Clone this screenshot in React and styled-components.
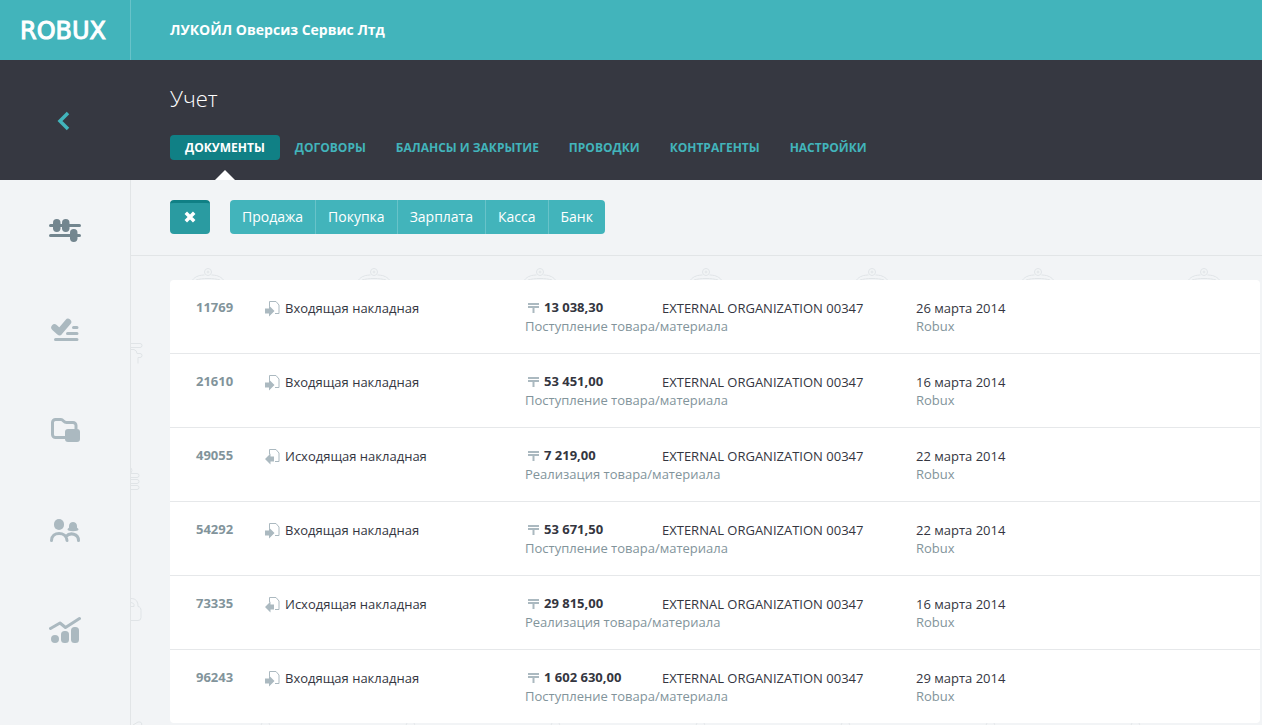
import React from 'react';
import styled, { createGlobalStyle } from 'styled-components';

const color = {
  teal: '#42b4bb',
  tealLine: '#68c3c9',
  tealDark: '#108085',
  tealMid: '#2a9ba1',
  dark: '#363841',
  page: '#f2f4f6',
  line: '#e2e5e7',
  icon: '#abb9c0',
  iconActive: '#73868f',
  muted: '#82949b',
  text: '#34363f',
};

const GlobalStyle = createGlobalStyle`
  *, *::before, *::after { box-sizing: border-box; }
  body {
    margin: 0;
    background: ${color.page};
    color: ${color.text};
    font-family: "Open Sans", "Noto Sans", sans-serif;
    font-size: 13px;
    line-height: 18px;
  }
  button { font-family: inherit; cursor: pointer; }
  a { text-decoration: none; }
`;

const Page = styled.div`
  display: flex;
  flex-direction: column;
  min-height: 100vh;
`;

const TopBar = styled.header`
  display: flex;
  height: 60px;
  background: ${color.teal};
  color: #fff;
`;

const Logo = styled.a`
  display: flex;
  align-items: center;
  flex: none;
  width: 131px;
  padding: 2px 0 0 20px;
  border-right: 1px solid ${color.tealLine};
  color: #fff;
  font-family: "DejaVu Sans", sans-serif;
  font-size: 24px;
  line-height: 28px;
  -webkit-text-stroke: 1px #fff;
`;

const Company = styled.div`
  padding: 20px 39px;
  font-size: 14px;
  font-weight: 700;
  line-height: 20px;
`;

const SectionBar = styled.div`
  display: flex;
  height: 120px;
  background: ${color.dark};
`;

const BackButton = styled.button`
  display: flex;
  align-items: center;
  justify-content: center;
  flex: none;
  width: 131px;
  padding: 2px 6px 0 0;
  border: 0;
  background: none;
`;

const SectionContent = styled.div`
  padding: 23px 39px 0;
`;

const Title = styled.h1`
  margin: 0 0 22px;
  color: #fff;
  font-size: 22px;
  font-weight: 300;
  line-height: 30px;
`;

const Tabs = styled.nav`
  display: flex;
`;

const Tab = styled.a`
  position: relative;
  padding: 0 15px;
  border-radius: 4px;
  background: ${(p) => (p.$active ? color.tealDark : 'transparent')};
  color: ${(p) => (p.$active ? '#fff' : color.teal)};
  font-size: 12px;
  font-weight: 700;
  line-height: 25px;
  white-space: nowrap;

  &::after {
    content: "";
    display: ${(p) => (p.$active ? 'block' : 'none')};
    position: absolute;
    left: 50%;
    top: 35px;
    margin-left: -10px;
    border: 10px solid transparent;
    border-top: 0;
    border-bottom-color: #fff;
  }
`;

const Body = styled.div`
  display: flex;
  flex: 1;
`;

const Sidebar = styled.nav`
  flex: none;
  width: 131px;
  border-right: 1px solid ${color.line};
`;

const SideLink = styled.a`
  display: flex;
  align-items: center;
  justify-content: center;
  height: 100px;
  color: ${(p) => (p.$active ? color.iconActive : color.icon)};
`;

const Main = styled.main`
  flex: 1;
  min-width: 0;
  display: flex;
  flex-direction: column;
`;

const Toolbar = styled.div`
  display: flex;
  gap: 20px;
  padding: 20px 39px 21px;
  border-bottom: 1px solid ${color.line};
`;

const CloseButton = styled.button`
  display: flex;
  align-items: center;
  justify-content: center;
  width: 40px;
  height: 34px;
  padding: 0 0 3px;
  border: 0;
  border-top: 3px solid ${color.tealDark};
  border-radius: 4px;
  background: ${color.tealMid};
`;

const ButtonGroup = styled.div`
  display: flex;
  border-radius: 4px;
  overflow: hidden;
`;

const GroupButton = styled.button`
  height: 34px;
  padding: 0 12px;
  border: 0;
  background: ${color.teal};
  color: #fff;
  font-size: 14px;
  line-height: 34px;

  & + & { border-left: 1px solid ${color.tealLine}; }
`;

const Workspace = styled.section`
  position: relative;
  flex: 1;
  padding: 24px 2px 2px 39px;
`;

const Backdrop = styled.svg`
  position: absolute;
  inset: 0;
  width: 100%;
  height: 100%;
`;

const DocumentTable = styled.table`
  position: relative;
  width: 100%;
  table-layout: fixed;
  border-collapse: separate;
  border-spacing: 0;
  border-radius: 4px;
  background: #fff;
`;

const Col = styled.col`
  width: ${(p) => p.$width};
`;

const Row = styled.tr`
  & + & > td {
    height: 74px;
    border-top: 1px solid #e6e8ea;
  }
`;

const Cell = styled.td`
  height: 73px;
  padding: 19px 0 0;
  vertical-align: top;
  white-space: nowrap;
`;

const IdCell = styled(Cell)`
  padding-left: 26px;
  color: ${color.muted};
  font-weight: 700;
  line-height: 16px;
`;

const DocType = styled.div`
  display: flex;
  gap: 5px;
`;

const Amount = styled.div`
  display: flex;
  gap: 5px;
  margin-bottom: 2px;
  padding-left: 3px;
  font-weight: 700;
  line-height: 16px;
`;

const Muted = styled.div`
  color: ${color.muted};
`;

const AccountingIcon = () => (
  <svg width="32" height="26" viewBox="0 -1 32 26" fill="currentColor" aria-hidden="true">
    <path d="M1.500 7.500h29M1.500 17.500h29" stroke="currentColor" strokeWidth="3" strokeLinecap="round" />
    <rect x="4" y="1" width="7.500" height="13" rx="3.700" />
    <rect x="13" y="1" width="7.500" height="13" rx="3.700" />
    <rect x="21" y="11" width="7.500" height="13" rx="3.700" />
  </svg>
);

const TasksIcon = () => (
  <svg width="30" height="24" viewBox="0 0 30 24" fill="none" stroke="currentColor" strokeLinecap="round" strokeLinejoin="round" aria-hidden="true">
    <path d="M4.500 9.500l5 4.500 8.500-10" strokeWidth="6.500" />
    <path d="M23.500 9.500h3.500M17.500 15.500h9.500M5.500 21.500H27" strokeWidth="3" />
  </svg>
);

const FolderIcon = () => (
  <svg width="32" height="26" viewBox="-2 -1 32 26" aria-hidden="true">
    <path d="M15 19.500H4.500a3 3 0 0 1-3-3v-12a3 3 0 0 1 3-3h5.500c2.500 0 2.500 3 5.500 3h6.500a3 3 0 0 1 3 3v4" fill="none" stroke="currentColor" strokeWidth="3" />
    <rect x="14" y="11" width="15" height="13" rx="3" fill="currentColor" />
  </svg>
);

const PeopleIcon = () => (
  <svg width="32" height="26" viewBox="0 -1 32 26" fill="currentColor" aria-hidden="true">
    <rect x="5" y="1" width="10" height="11" rx="5" />
    <path d="M20 8c0-5.300 8-5.300 8 0v1.500c0 .8 1.500.8 1.500 2 0 .9-2.500 1.700-5.500 1.700s-5.500-.8-5.500-1.700c0-1.200 1.500-1.200 1.500-2z" />
    <path d="M2.500 22.500c0-9.500 15-9.500 15.500 0M17 18.500c4-4.500 12.500-3 12.500 4" fill="none" stroke="currentColor" strokeWidth="3" strokeLinecap="round" />
  </svg>
);

const ReportsIcon = () => (
  <svg width="32" height="28" viewBox="0 0 32 28" fill="currentColor" aria-hidden="true">
    <path d="M1.500 12.500L11 7l5.500 4.500L30.500 2.500" fill="none" stroke="currentColor" strokeWidth="3" strokeLinecap="round" strokeLinejoin="round" />
    <rect x="2" y="19" width="8" height="8" rx="4" />
    <rect x="12" y="15" width="8" height="12" rx="3.500" />
    <rect x="22" y="11" width="8" height="16" rx="3.500" />
  </svg>
);

const InvoiceIcon = ({ incoming }) => (
  <svg width="15" height="19" viewBox="0 0 15 19" aria-hidden="true">
    <path d="M4.500 7.500V2.500H11L14 6v8.500H10" fill="none" stroke={color.icon} />
    <path
      d={incoming ? 'M0 9.500h4V6.500l5.500 5.500L4 17.500v-3H0z' : 'M9 9.500H5.500V6.500L0 12l5.500 5.500v-3H9z'}
      fill={color.icon}
    />
  </svg>
);

const TengeIcon = () => (
  <svg width="11" height="16" viewBox="0 0 11 16" fill={color.icon} aria-hidden="true">
    <path d="M0 4h11v2H0zM0 7h11v2H6.500v5h-2V9H0z" />
  </svg>
);

const BackdropPattern = () => (
  <Backdrop aria-hidden="true" fill="none" stroke="#e0e4e7">
    <defs>
      <pattern id="purse" x="-6" y="12" width="166" height="460" patternUnits="userSpaceOnUse">
        <circle cx="83" cy="4" r="3.500" />
        <circle cx="83" cy="4" r="1" />
        <path d="M67.500 12c3-4 8-5 12-5M98.500 12c-3-4-8-5-12-5M71 12c6-2 18-2 24 0" />
      </pattern>
      <pattern id="coins" x="122" y="464" width="145" height="460" patternUnits="userSpaceOnUse">
        <path d="M8 7c0-8 9-8 9 0" />
      </pattern>
    </defs>
    <rect width="100%" height="26" fill="url(#purse)" stroke="none" />
    <rect x="100" y="464" width="100%" height="10" fill="url(#coins)" stroke="none" />
    <path d="M0 87.500h9a2 2 0 0 1 0 4H0M0 93.500h3q3 1 3 4h3a2 2 0 0 1 0 4H7v6" />
    <path d="M0 212q2 2 0 5M0 217.500h6a2 2 0 0 1 0 4H0M0 223.500h6a2 2 0 0 1 0 4H0M0 229.500h6a2 2 0 0 1 0 4H0" />
    <path d="M0 342.500c5 0 7 3 7 8 2 0 3 2 3 4v7q0 3-3 3H0M0 350.500h3v-2q-1-2-3-2" />
    <path d="M2 469l5-3q3-1 4 2l-2 3" />
  </Backdrop>
);

const tabs = ['Документы', 'Договоры', 'Балансы и закрытие', 'Проводки', 'Контрагенты', 'Настройки'];

const sections = [
  { label: 'Учет', Icon: AccountingIcon },
  { label: 'Задачи', Icon: TasksIcon },
  { label: 'Файлы', Icon: FolderIcon },
  { label: 'Сотрудники', Icon: PeopleIcon },
  { label: 'Отчеты', Icon: ReportsIcon },
];

const filters = ['Продажа', 'Покупка', 'Зарплата', 'Касса', 'Банк'];

const documents = [
  { id: '11769', incoming: true, amount: '13 038,30', date: '26 марта 2014' },
  { id: '21610', incoming: true, amount: '53 451,00', date: '16 марта 2014' },
  { id: '49055', incoming: false, amount: '7 219,00', date: '22 марта 2014' },
  { id: '54292', incoming: true, amount: '53 671,50', date: '22 марта 2014' },
  { id: '73335', incoming: false, amount: '29 815,00', date: '16 марта 2014' },
  { id: '96243', incoming: true, amount: '1 602 630,00', date: '29 марта 2014' },
];

const DocumentRow = ({ doc }) => (
  <Row>
    <IdCell>{doc.id}</IdCell>
    <Cell>
      <DocType>
        <InvoiceIcon incoming={doc.incoming} />
        {doc.incoming ? 'Входящая накладная' : 'Исходящая накладная'}
      </DocType>
    </Cell>
    <Cell>
      <Amount>
        <TengeIcon />
        {doc.amount}
      </Amount>
      <Muted>{doc.incoming ? 'Поступление товара/материала' : 'Реализация товара/материала'}</Muted>
    </Cell>
    <Cell>EXTERNAL ORGANIZATION 00347</Cell>
    <Cell>
      {doc.date}
      <Muted>Robux</Muted>
    </Cell>
  </Row>
);

export default function App() {
  return (
    <Page>
      <GlobalStyle />
      <TopBar>
        <Logo href="#">ROBUX</Logo>
        <Company>ЛУКОЙЛ Оверсиз Сервис Лтд</Company>
      </TopBar>
      <SectionBar>
        <BackButton type="button" aria-label="Назад">
          <svg width="14" height="20" viewBox="0 0 14 20" fill="none" stroke={color.teal} strokeWidth="3.500" aria-hidden="true">
            <path d="M12 2L4 10l8 8" />
          </svg>
        </BackButton>
        <SectionContent>
          <Title>Учет</Title>
          <Tabs>
            {tabs.map((name, i) => (
              <Tab key={name} href="#" $active={i === 0} aria-current={i === 0 ? 'page' : undefined}>
                {name.toUpperCase()}
              </Tab>
            ))}
          </Tabs>
        </SectionContent>
      </SectionBar>
      <Body>
        <Sidebar>
          {sections.map(({ label, Icon }, i) => (
            <SideLink key={label} href="#" aria-label={label} $active={i === 0}>
              <Icon />
            </SideLink>
          ))}
        </Sidebar>
        <Main>
          <Toolbar>
            <CloseButton type="button" aria-label="Закрыть">
              <svg width="12" height="12" viewBox="0 0 12 12" stroke="#fff" strokeWidth="3.500" aria-hidden="true">
                <path d="M1.800 1.800l8.400 8.400M10.200 1.800l-8.400 8.400" />
              </svg>
            </CloseButton>
            <ButtonGroup>
              {filters.map((name) => (
                <GroupButton key={name} type="button">{name}</GroupButton>
              ))}
            </ButtonGroup>
          </Toolbar>
          <Workspace>
            <BackdropPattern />
            <DocumentTable>
              <colgroup>
                <Col $width="95px" />
                <Col $width="260px" />
                <Col $width="137px" />
                <Col $width="254px" />
                <Col $width="auto" />
              </colgroup>
              <tbody>
                {documents.map((doc) => (
                  <DocumentRow key={doc.id} doc={doc} />
                ))}
              </tbody>
            </DocumentTable>
          </Workspace>
        </Main>
      </Body>
    </Page>
  );
}
